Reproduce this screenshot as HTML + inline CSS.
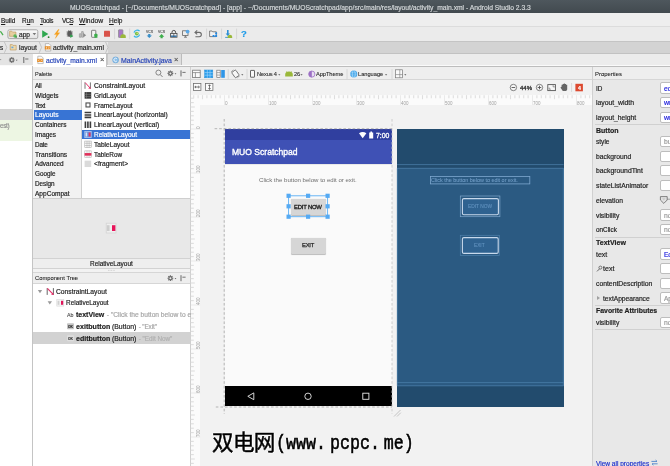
<!DOCTYPE html>
<html><head><meta charset="utf-8">
<style>
*{margin:0;padding:0;box-sizing:border-box}
html,body{width:670px;height:466px;overflow:hidden;background:#f2f2f2}
body{font-family:"Liberation Sans",sans-serif;font-size:6.7px;color:#1e1e1e;position:relative;line-height:1}
.a{position:absolute}
.t{position:absolute;white-space:pre;line-height:12px;height:12px;will-change:transform;-webkit-text-stroke:0.18px currentColor}
svg{position:absolute;overflow:visible}
</style></head><body>
<div class="a" style="left:0px;top:0px;width:670px;height:13px;background:linear-gradient(#4e575d,#424a4f);"></div>
<div class="a" style="left:0px;top:13px;width:670px;height:13.2px;background:#eeeeee;"></div>
<div class="a" style="left:0px;top:26.2px;width:670px;height:15px;background:#ebebeb;border-top:1px solid #dcdcdc;"></div>
<div class="a" style="left:0px;top:41.2px;width:670px;height:12.2px;background:#d3d3d3;border-top:1px solid #c4c4c4;"></div>
<div class="a" style="left:0px;top:41.7px;width:108px;height:11.5px;background:#e6e6e6;"></div>
<div class="a" style="left:0px;top:53.4px;width:670px;height:12px;background:#ececec;border-top:1px solid #c2c2c2;"></div>
<div class="a" style="left:0px;top:65.4px;width:670px;height:1.3px;background:#fafafa;border-bottom:0.7px solid #bdbdbd;"></div>
<div class="a" style="left:0px;top:54px;width:32.5px;height:11px;background:#e4e4e4;"></div>
<div class="a" style="left:107.3px;top:54px;width:74.5px;height:11.4px;background:#dedede;border-right:1px solid #bcbcbc;border-left:1px solid #c8c8c8;"></div>
<div class="a" style="left:32.8px;top:53.6px;width:74.5px;height:13.2px;background:#ffffff;border-right:1px solid #c4c4c4"></div>
<div class="a" style="left:0px;top:65.6px;width:32.5px;height:401px;background:#ffffff;"></div>
<div class="a" style="left:0px;top:109px;width:32.5px;height:10.6px;background:#d4d4d4;"></div>
<div class="a" style="left:0px;top:119.6px;width:32.5px;height:21px;background:#edf6e3;"></div>
<div class="a" style="left:32.3px;top:66px;width:1px;height:400px;background:#c4c4c4;"></div>
<div class="a" style="left:33.3px;top:66.7px;width:156.5px;height:13.5px;background:#eeeeee;border-bottom:1px solid #d6d6d6;"></div>
<div class="a" style="left:33.3px;top:80.2px;width:48.5px;height:118px;background:#f2f2f2;border-right:1px solid #cfcfcf;"></div>
<div class="a" style="left:81.8px;top:80.2px;width:108px;height:118px;background:#ffffff;"></div>
<div class="a" style="left:34.4px;top:110px;width:47.3px;height:9.9px;background:#3874d4;"></div>
<div class="a" style="left:81.8px;top:129.6px;width:108px;height:9.8px;background:#3874d4;"></div>
<div class="a" style="left:33.3px;top:197.6px;width:156.5px;height:61px;background:#e8e8e8;border-top:1px solid #cfcfcf;"></div>
<div class="a" style="left:33.3px;top:258px;width:156.5px;height:11px;background:#eeeeee;border-top:1px solid #d2d2d2;border-bottom:1px solid #d2d2d2;"></div>
<div class="a" style="left:33.3px;top:269px;width:156.5px;height:3.2px;background:#f2f2f2;"></div>
<div class="a" style="left:33.3px;top:272px;width:156.5px;height:12.2px;background:#eeeeee;border-top:1px solid #d6d6d6;border-bottom:1px solid #d6d6d6;"></div>
<div class="a" style="left:33.3px;top:284.2px;width:156.5px;height:182px;background:#ffffff;"></div>
<div class="a" style="left:33.3px;top:332.2px;width:156.5px;height:11.9px;background:#d2d2d2;"></div>
<div class="a" style="left:189.7px;top:66.7px;width:0.9px;height:400px;background:#d0d0d0;"></div>
<div class="a" style="left:190.6px;top:66.7px;width:401.5px;height:13.6px;background:#eeeeee;border-bottom:1px solid #d6d6d6;"></div>
<div class="a" style="left:190.6px;top:80.3px;width:401.5px;height:14.7px;background:#f2f2f2;"></div>
<div class="a" style="left:190.6px;top:95px;width:401.2px;height:10px;background:#fbfbfb;"></div>
<div class="a" style="left:190.6px;top:95px;width:9.6px;height:371px;background:#fbfbfb;"></div>
<div class="a" style="left:200.2px;top:105px;width:391.6px;height:361px;background:#f2f2f2;"></div>
<div class="a" style="left:592.2px;top:66.7px;width:78px;height:400px;background:#e8e8e8;border-left:1px solid #d0d0d0;"></div>
<div class="a" style="left:593.2px;top:66.7px;width:77px;height:13.6px;background:#eeeeee;border-bottom:1px solid #d6d6d6;"></div>
<div class="a" style="left:595px;top:124.4px;width:75px;height:0.8px;background:#d0d0d0;"></div>
<div class="a" style="left:595px;top:236.5px;width:75px;height:0.8px;background:#d0d0d0;"></div>
<div class="a" style="left:595px;top:305px;width:75px;height:0.8px;background:#d0d0d0;"></div>
<div class="a" style="left:595px;top:329.4px;width:75px;height:0.8px;background:#d0d0d0;"></div>
<div class="a" style="left:660.3px;top:82.4px;width:14px;height:11.2px;background:#ffffff;border:1px solid #bdbdbd;border-radius:2px;"></div>
<div class="a" style="left:660.3px;top:96.9px;width:14px;height:11.2px;background:#ffffff;border:1px solid #bdbdbd;border-radius:2px;"></div>
<div class="a" style="left:660.3px;top:111.80000000000001px;width:14px;height:11.2px;background:#ffffff;border:1px solid #bdbdbd;border-radius:2px;"></div>
<div class="a" style="left:660.3px;top:135.9px;width:14px;height:11.2px;background:#ffffff;border:1px solid #bdbdbd;border-radius:2px;"></div>
<div class="a" style="left:660.3px;top:150.6px;width:14px;height:11.2px;background:#ffffff;border:1px solid #bdbdbd;border-radius:2px;"></div>
<div class="a" style="left:660.3px;top:165.3px;width:14px;height:11.2px;background:#ffffff;border:1px solid #bdbdbd;border-radius:2px;"></div>
<div class="a" style="left:660.3px;top:179.9px;width:14px;height:11.2px;background:#ffffff;border:1px solid #bdbdbd;border-radius:2px;"></div>
<div class="a" style="left:660.3px;top:209.4px;width:14px;height:11.2px;background:#ffffff;border:1px solid #bdbdbd;border-radius:2px;"></div>
<div class="a" style="left:660.3px;top:224.0px;width:14px;height:11.2px;background:#ffffff;border:1px solid #bdbdbd;border-radius:2px;"></div>
<div class="a" style="left:660.3px;top:248.4px;width:14px;height:11.2px;background:#ffffff;border:1px solid #bdbdbd;border-radius:2px;"></div>
<div class="a" style="left:660.3px;top:263.09999999999997px;width:14px;height:11.2px;background:#ffffff;border:1px solid #bdbdbd;border-radius:2px;"></div>
<div class="a" style="left:660.3px;top:277.79999999999995px;width:14px;height:11.2px;background:#ffffff;border:1px solid #bdbdbd;border-radius:2px;"></div>
<div class="a" style="left:660.3px;top:292.4px;width:14px;height:11.2px;background:#ffffff;border:1px solid #bdbdbd;border-radius:2px;"></div>
<div class="a" style="left:660.3px;top:316.79999999999995px;width:14px;height:11.2px;background:#ffffff;border:1px solid #bdbdbd;border-radius:2px;"></div>
<svg style="left:0px;top:0px" width="670" height="466" viewBox="0 0 670 466"><path d="M667 199.2h3" stroke="#9a9a9a" stroke-width="0.9"/><path d="M660.4 196.6h6.8v3.4l-3.4 3.4l-3.4-3.4z" fill="#e2e2e2" stroke="#666" stroke-width="0.8"/><path d="M662 198.2h3.6l-1.8 2.4z" fill="#c8c8c8"/></svg>
<div class="a" style="left:224.5px;top:128.9px;width:167.2px;height:277.6px;background:#fafafa;"></div>
<div class="a" style="left:224.5px;top:128.9px;width:167.2px;height:11px;background:#303f9f;"></div>
<div class="a" style="left:224.5px;top:139.9px;width:167.2px;height:24px;background:#3f51b5;"></div>
<div class="a" style="left:224.5px;top:163.9px;width:167.2px;height:1.6px;background:linear-gradient(#d8d8d8,#fafafa);"></div>
<div class="a" style="left:224.5px;top:385.8px;width:167.2px;height:20.6px;background:#000000;"></div>
<div class="a" style="left:290.5px;top:198.7px;width:35.6px;height:16px;background:#d6d6d6;border-radius:1.2px;box-shadow:0 0.5px 0.8px rgba(0,0,0,0.25);"></div>
<div class="a" style="left:290.5px;top:237.9px;width:35.6px;height:15.8px;background:#d6d6d6;border-radius:1.2px;box-shadow:0 0.5px 0.8px rgba(0,0,0,0.25);"></div>
<svg style="left:0px;top:0px" width="670" height="466" viewBox="0 0 670 466"><rect x="288.6" y="195.8" width="39" height="20.9" fill="none" stroke="#5aaef5" stroke-width="0.9"/><rect x="286.5" y="193.70000000000002" width="4.2" height="4.2" fill="#55aaf3"/><rect x="306.0" y="193.70000000000002" width="4.2" height="4.2" fill="#55aaf3"/><rect x="325.5" y="193.70000000000002" width="4.2" height="4.2" fill="#55aaf3"/><rect x="286.5" y="204.20000000000002" width="4.2" height="4.2" fill="#55aaf3"/><rect x="325.5" y="204.20000000000002" width="4.2" height="4.2" fill="#55aaf3"/><rect x="286.5" y="214.6" width="4.2" height="4.2" fill="#55aaf3"/><rect x="306.0" y="214.6" width="4.2" height="4.2" fill="#55aaf3"/><rect x="325.5" y="214.6" width="4.2" height="4.2" fill="#55aaf3"/></svg>
<svg style="left:0px;top:0px" width="670" height="466" viewBox="0 0 670 466"><path d="M359 133.2 Q362.7 130.6 366.4 133.2 L362.7 138.2z" fill="#fff"/><path d="M369.2 132.4h1.2v-0.9h1.6v0.9h1.2v6.1h-4z" fill="#fff"/><path d="M253.8 392.9v6.8l-6-3.4z" fill="none" stroke="#e8e8e8" stroke-width="0.9"/><circle cx="308" cy="396.3" r="3.2" fill="none" stroke="#e8e8e8" stroke-width="0.9"/><rect x="362.8" y="393.2" width="6.1" height="6.1" fill="none" stroke="#e8e8e8" stroke-width="0.9"/></svg>
<svg style="left:0px;top:0px" width="670" height="466" viewBox="0 0 670 466"><g stroke="#a4a4a4" stroke-width="0.8" stroke-dasharray="2.6 2" fill="none"><path d="M224.2 119V414"/><path d="M392 119V414" stroke="#c4c4c4"/><path d="M214.6 128.7H392"/><path d="M215.8 407H392"/></g><g stroke="#b0b0b0" stroke-width="0.7"><path d="M394 416.5l6.5-6.5M397 416.5l3.8-3.8"/></g></svg>
<div class="a" style="left:397px;top:129px;width:166.6px;height:277.6px;background:#2b5a82;"></div>
<div class="a" style="left:397px;top:129px;width:166.6px;height:39.2px;background:#224b6d;"></div>
<div class="a" style="left:397px;top:386.2px;width:166.6px;height:20.4px;background:#224b6d;"></div>
<svg style="left:0px;top:0px" width="670" height="466" viewBox="0 0 670 466"><g fill="none" stroke="#4f82ad" stroke-width="0.7"><path d="M397 164.6H563.6M397 168.3H563.6M397 382.6H563.6M397 385.8H563.6"/><path d="M397.3 168.3V385.8M563.3 168.3V385.8"/><rect x="430.4" y="176.4" width="99.4" height="7.5" stroke="#7da7cf" stroke-width="0.8"/><rect x="460.3" y="196" width="39.6" height="20.7" stroke="#7fa6cc"/><rect x="462.4" y="198.6" width="36" height="16.2" rx="1.5" fill="#2f6290" stroke="#c8d9ec" stroke-width="1.1"/><rect x="460.3" y="235.3" width="39" height="20.2" stroke="#4f80ab"/><rect x="462.4" y="237.6" width="35.8" height="15.8" rx="1.5" fill="#2f6290" stroke="#c8d9ec" stroke-width="1.1"/></g></svg>
<svg style="left:0px;top:0px" width="670" height="466" viewBox="0 0 670 466"><g stroke="#dedede" stroke-width="1.1"><path d="M193.70 95.2v3"/><path d="M198.10 95.2v3"/><path d="M202.50 95.2v4"/><path d="M206.90 95.2v3"/><path d="M211.30 95.2v3"/><path d="M215.70 95.2v3"/><path d="M220.10 95.2v3"/><path d="M224.50 95.2v9.8" stroke="#e6e6e6" stroke-width="0.8"/><path d="M228.90 95.2v3"/><path d="M233.30 95.2v3"/><path d="M237.70 95.2v3"/><path d="M242.10 95.2v3"/><path d="M246.50 95.2v4"/><path d="M250.90 95.2v3"/><path d="M255.30 95.2v3"/><path d="M259.70 95.2v3"/><path d="M264.10 95.2v3"/><path d="M268.50 95.2v9.8" stroke="#e6e6e6" stroke-width="0.8"/><path d="M272.90 95.2v3"/><path d="M277.30 95.2v3"/><path d="M281.70 95.2v3"/><path d="M286.10 95.2v3"/><path d="M290.50 95.2v4"/><path d="M294.90 95.2v3"/><path d="M299.30 95.2v3"/><path d="M303.70 95.2v3"/><path d="M308.10 95.2v3"/><path d="M312.50 95.2v9.8" stroke="#e6e6e6" stroke-width="0.8"/><path d="M316.90 95.2v3"/><path d="M321.30 95.2v3"/><path d="M325.70 95.2v3"/><path d="M330.10 95.2v3"/><path d="M334.50 95.2v4"/><path d="M338.90 95.2v3"/><path d="M343.30 95.2v3"/><path d="M347.70 95.2v3"/><path d="M352.10 95.2v3"/><path d="M356.50 95.2v9.8" stroke="#e6e6e6" stroke-width="0.8"/><path d="M360.90 95.2v3"/><path d="M365.30 95.2v3"/><path d="M369.70 95.2v3"/><path d="M374.10 95.2v3"/><path d="M378.50 95.2v4"/><path d="M382.90 95.2v3"/><path d="M387.30 95.2v3"/><path d="M391.70 95.2v3"/><path d="M396.10 95.2v3"/><path d="M400.50 95.2v9.8" stroke="#e6e6e6" stroke-width="0.8"/><path d="M404.90 95.2v3"/><path d="M409.30 95.2v3"/><path d="M413.70 95.2v3"/><path d="M418.10 95.2v3"/><path d="M422.50 95.2v4"/><path d="M426.90 95.2v3"/><path d="M431.30 95.2v3"/><path d="M435.70 95.2v3"/><path d="M440.10 95.2v3"/><path d="M444.50 95.2v9.8" stroke="#e6e6e6" stroke-width="0.8"/><path d="M448.90 95.2v3"/><path d="M453.30 95.2v3"/><path d="M457.70 95.2v3"/><path d="M462.10 95.2v3"/><path d="M466.50 95.2v4"/><path d="M470.90 95.2v3"/><path d="M475.30 95.2v3"/><path d="M479.70 95.2v3"/><path d="M484.10 95.2v3"/><path d="M488.50 95.2v9.8" stroke="#e6e6e6" stroke-width="0.8"/><path d="M492.90 95.2v3"/><path d="M497.30 95.2v3"/><path d="M501.70 95.2v3"/><path d="M506.10 95.2v3"/><path d="M510.50 95.2v4"/><path d="M514.90 95.2v3"/><path d="M519.30 95.2v3"/><path d="M523.70 95.2v3"/><path d="M528.10 95.2v3"/><path d="M532.50 95.2v9.8" stroke="#e6e6e6" stroke-width="0.8"/><path d="M536.90 95.2v3"/><path d="M541.30 95.2v3"/><path d="M545.70 95.2v3"/><path d="M550.10 95.2v3"/><path d="M554.50 95.2v4"/><path d="M558.90 95.2v3"/><path d="M563.30 95.2v3"/><path d="M567.70 95.2v3"/><path d="M572.10 95.2v3"/><path d="M576.50 95.2v9.8" stroke="#e6e6e6" stroke-width="0.8"/><path d="M580.90 95.2v3"/><path d="M585.30 95.2v3"/><path d="M589.70 95.2v3"/><path d="M190.8 98.20h3"/><path d="M190.8 102.60h3"/><path d="M190.8 107.00h4"/><path d="M190.8 111.40h3"/><path d="M190.8 115.80h3"/><path d="M190.8 120.20h3"/><path d="M190.8 124.60h3"/><path d="M190.8 129.00h9.4" stroke="#e6e6e6" stroke-width="0.8"/><path d="M190.8 133.40h3"/><path d="M190.8 137.80h3"/><path d="M190.8 142.20h3"/><path d="M190.8 146.60h3"/><path d="M190.8 151.00h4"/><path d="M190.8 155.40h3"/><path d="M190.8 159.80h3"/><path d="M190.8 164.20h3"/><path d="M190.8 168.60h3"/><path d="M190.8 173.00h9.4" stroke="#e6e6e6" stroke-width="0.8"/><path d="M190.8 177.40h3"/><path d="M190.8 181.80h3"/><path d="M190.8 186.20h3"/><path d="M190.8 190.60h3"/><path d="M190.8 195.00h4"/><path d="M190.8 199.40h3"/><path d="M190.8 203.80h3"/><path d="M190.8 208.20h3"/><path d="M190.8 212.60h3"/><path d="M190.8 217.00h9.4" stroke="#e6e6e6" stroke-width="0.8"/><path d="M190.8 221.40h3"/><path d="M190.8 225.80h3"/><path d="M190.8 230.20h3"/><path d="M190.8 234.60h3"/><path d="M190.8 239.00h4"/><path d="M190.8 243.40h3"/><path d="M190.8 247.80h3"/><path d="M190.8 252.20h3"/><path d="M190.8 256.60h3"/><path d="M190.8 261.00h9.4" stroke="#e6e6e6" stroke-width="0.8"/><path d="M190.8 265.40h3"/><path d="M190.8 269.80h3"/><path d="M190.8 274.20h3"/><path d="M190.8 278.60h3"/><path d="M190.8 283.00h4"/><path d="M190.8 287.40h3"/><path d="M190.8 291.80h3"/><path d="M190.8 296.20h3"/><path d="M190.8 300.60h3"/><path d="M190.8 305.00h9.4" stroke="#e6e6e6" stroke-width="0.8"/><path d="M190.8 309.40h3"/><path d="M190.8 313.80h3"/><path d="M190.8 318.20h3"/><path d="M190.8 322.60h3"/><path d="M190.8 327.00h4"/><path d="M190.8 331.40h3"/><path d="M190.8 335.80h3"/><path d="M190.8 340.20h3"/><path d="M190.8 344.60h3"/><path d="M190.8 349.00h9.4" stroke="#e6e6e6" stroke-width="0.8"/><path d="M190.8 353.40h3"/><path d="M190.8 357.80h3"/><path d="M190.8 362.20h3"/><path d="M190.8 366.60h3"/><path d="M190.8 371.00h4"/><path d="M190.8 375.40h3"/><path d="M190.8 379.80h3"/><path d="M190.8 384.20h3"/><path d="M190.8 388.60h3"/><path d="M190.8 393.00h9.4" stroke="#e6e6e6" stroke-width="0.8"/><path d="M190.8 397.40h3"/><path d="M190.8 401.80h3"/><path d="M190.8 406.20h3"/><path d="M190.8 410.60h3"/><path d="M190.8 415.00h4"/><path d="M190.8 419.40h3"/><path d="M190.8 423.80h3"/><path d="M190.8 428.20h3"/><path d="M190.8 432.60h3"/><path d="M190.8 437.00h9.4" stroke="#e6e6e6" stroke-width="0.8"/><path d="M190.8 441.40h3"/><path d="M190.8 445.80h3"/><path d="M190.8 450.20h3"/><path d="M190.8 454.60h3"/><path d="M190.8 459.00h4"/><path d="M190.8 463.40h3"/></g></svg><svg style="left:0;top:0" width="670" height="466" viewBox="0 0 670 466"><path d="M-1 31.2 L1 32 L3 35.2" fill="none" stroke="#4caf50" stroke-width="1.3"/>
<defs><linearGradient id="cg" x1="0" y1="0" x2="0" y2="1"><stop offset="0" stop-color="#fbfbfb"/><stop offset="1" stop-color="#e2e2e2"/></linearGradient></defs><rect x="7.9" y="29.8" width="29.9" height="8.8" rx="1.6" fill="url(#cg)" stroke="#a2a2a2" stroke-width="0.9"/>
<path d="M9.6 31.2h2.2l0.7 0.8h3.4v4.3h-6.3z" fill="#e6cfa0" stroke="#b89255" stroke-width="0.6"/>
<circle cx="15" cy="36" r="1.7" fill="#5cb85c"/><circle cx="16.2" cy="37" r="0.8" fill="#2e7d32"/>
<path d="M32.6 33h3.6l-1.8 2.3z" fill="#777"/>
<path d="M42.2 30.2v7.6l6.2-3.8z" fill="#2fa84f"/><circle cx="48.6" cy="37.2" r="0.9" fill="#2e7d32"/>
<path d="M58.2 29.6l-3.8 5h2.3l-1.4 3.8 4.4-5.6h-2.4l1.9-3.2z" fill="#f5a01e" stroke="#f5a01e" stroke-width="0.3"/>
<ellipse cx="69.6" cy="33.8" rx="2.3" ry="3" fill="#5a5a5a"/><path d="M66.5 32h6.4M66.5 34h6.4M66.8 36h6M68.3 30.2l1 1M71 30.2l-1 1" stroke="#5a5a5a" stroke-width="0.7"/><path d="M70.3 34.3v3.6l3-1.8z" fill="#2fa84f"/>
<path d="M79.4 37.2v-3.4h1.6v3.4zM81.6 37.2v-5.6h1.6v5.6zM83.6 37.2v-4.4" stroke="#9a9a9a" stroke-width="0.7" fill="#c8c8c8"/><path d="M83.4 33.3v4l2.8-2z" fill="#8a8a8a"/>
<rect x="91.6" y="30.3" width="4.2" height="7" rx="0.5" fill="#f4f4f4" stroke="#666" stroke-width="0.8"/><path d="M94.4 34.2h3v3.6h-3z" fill="#3cae4a"/><circle cx="95.9" cy="35" r="1.5" fill="#3cae4a"/>
<rect x="104" y="30.8" width="6" height="6" rx="0.4" fill="#d9534a"/>
<path d="M114.6 28.6v10.6" stroke="#cfcfcf" stroke-width="0.8"/>
<path d="M129.7 28.6v10.6" stroke="#cfcfcf" stroke-width="0.8"/>
<path d="M206.6 28.6v10.6" stroke="#cfcfcf" stroke-width="0.8"/>
<path d="M221.6 28.6v10.6" stroke="#cfcfcf" stroke-width="0.8"/>
<path d="M236.6 28.6v10.6" stroke="#cfcfcf" stroke-width="0.8"/>
<rect x="118.5" y="29.8" width="4.4" height="7.6" rx="0.5" fill="#a878c8" stroke="#888" stroke-width="0.7"/><path d="M120.4 38v-1.4a2.6 2.2 0 0 1 5.4 0v1.4z" fill="#9ab83a"/>
<path d="M134 32.6a3.3 3.3 0 0 1 5.6-1.4" fill="none" stroke="#35b5e5" stroke-width="1.2"/><path d="M139.6 34.6a3.3 3.3 0 0 1 -5.6 1.4" fill="none" stroke="#35b5e5" stroke-width="1.2"/><circle cx="136.8" cy="33.6" r="1.9" fill="#6fbf4a"/><circle cx="137.2" cy="33.2" r="0.8" fill="#e8e070"/>
<path d="M148.2 34v1.4h-1.6l2.7 2.7 2.7-2.7h-1.6v-1.4z" fill="#3a8fc8"/>
<path d="M160.5 38.2v-1.4h-1.6l2.7-2.8 2.7 2.8h-1.6v1.4z" fill="#3cae4a"/>
<path d="M172 33.6v-1.4a1.8 1.8 0 0 1 3.6 0v1.4" fill="none" stroke="#444" stroke-width="0.9"/><rect x="170.6" y="33.4" width="6.4" height="3.8" fill="#f0f0f0" stroke="#444" stroke-width="0.8"/><path d="M171 36.2h5.6" stroke="#2a6fa8" stroke-width="1.4"/><path d="M173.8 33.6v3" stroke="#444" stroke-width="0.7"/>
<rect x="182.6" y="30.8" width="5.4" height="4.6" fill="#eee" stroke="#666" stroke-width="0.8"/><path d="M184 37.2h3M185.4 35.4v1.8" stroke="#666" stroke-width="0.8"/><circle cx="187.6" cy="31.6" r="1.9" fill="#58a8e8"/>
<path d="M195.6 32.4h3.6a2.1 2.1 0 0 1 0 4.3h-3.8" fill="none" stroke="#6a6a6a" stroke-width="1.1"/><path d="M197.2 30.4l-2.2 2 2.2 2" fill="none" stroke="#6a6a6a" stroke-width="1.1"/>
<path d="M209.6 31h2.4l0.7 0.8h3.6v4.8h-6.7z" fill="#f2f2f2" stroke="#666" stroke-width="0.8"/><rect x="212.6" y="35" width="1.9" height="1.9" fill="#1e88e5"/><rect x="215.2" y="35" width="1.9" height="1.9" fill="#1e88e5"/><rect x="215.2" y="32.4" width="1.9" height="1.9" fill="#1e88e5"/>
<path d="M227 30v3.6h-1.4l2.2 2.4 2.2-2.4h-1.4v-3.6z" fill="#2d8fd6"/><path d="M225.2 37.4h3" stroke="#2d8fd6" stroke-width="0.9"/><path d="M227.6 38v-1.2a2.3 2 0 0 1 4.6 0v1.2z" fill="#9ab83a"/>
<g fill="none" stroke="#b4b4b4" stroke-width="0.7"><path d="M4.4 42l2.4 5.4-2.4 5.4M39.2 42l2.4 5.4-2.4 5.4M105.6 42l2.4 5.4-2.4 5.4"/></g>
<path d="M10.2 44.6h2.2l0.6 0.8h3.2v4.6h-6z" fill="#ecd9ad" stroke="#b89255" stroke-width="0.6"/><rect x="11.4" y="46.6" width="2" height="1.6" fill="#6aa8dc"/>
<path d="M45.4 43.6h3.6l1.8 1.8v5.6h-5.4z" fill="#fafafa" stroke="#999" stroke-width="0.6"/><rect x="44.8" y="46.2" width="5.6" height="3.2" fill="#e8902a"/><path d="M46.0 47.800000000000004l1-0.8M46.0 47.800000000000004l1 0.8M49.3 47.800000000000004l-1-0.8M49.3 47.800000000000004l-1 0.8" stroke="#fff" stroke-width="0.5"/>
<path d="M37.8 56.2h3.6l1.8 1.8v5.6h-5.4z" fill="#fafafa" stroke="#999" stroke-width="0.6"/><rect x="37.199999999999996" y="58.800000000000004" width="5.6" height="3.2" fill="#e8902a"/><path d="M38.4 60.400000000000006l1-0.8M38.4 60.400000000000006l1 0.8M41.699999999999996 60.400000000000006l-1-0.8M41.699999999999996 60.400000000000006l-1 0.8" stroke="#fff" stroke-width="0.5"/>
<circle cx="115.6" cy="59.9" r="3" fill="#8cc0ea" stroke="#5a9ad0" stroke-width="0.5"/><path d="M116.9 58.8a1.7 1.7 0 1 0 0 2.2" fill="none" stroke="#fff" stroke-width="0.8"/>
<circle cx="11.8" cy="60" r="1.55" fill="none" stroke="#6a6a6a" stroke-width="1.1"/><g stroke="#6a6a6a" stroke-width="1.15"><path d="M13.40 60.00L14.70 60.00"/><path d="M12.93 61.13L13.85 62.05"/><path d="M11.80 61.60L11.80 62.90"/><path d="M10.67 61.13L9.75 62.05"/><path d="M10.20 60.00L8.90 60.00"/><path d="M10.67 58.87L9.75 57.95"/><path d="M11.80 58.40L11.80 57.10"/><path d="M12.93 58.87L13.85 57.95"/></g>
<path d="M15.8 59.8h1.8l-0.9 1.2z" fill="#666"/>
<path d="M23.8 57v6" stroke="#666" stroke-width="1"/><path d="M25.2 59h3.2" stroke="#666" stroke-width="0.9"/>
<path d="M0 59.6h1.2" stroke="#888" stroke-width="0.8"/>
<circle cx="158.4" cy="72.6" r="2.5" fill="none" stroke="#7a7a7a" stroke-width="0.9"/><path d="M160.3 74.6l2.2 2.3" stroke="#7a7a7a" stroke-width="1"/>
<circle cx="170.4" cy="73.4" r="1.55" fill="none" stroke="#6a6a6a" stroke-width="1.1"/><g stroke="#6a6a6a" stroke-width="1.15"><path d="M172.00 73.40L173.30 73.40"/><path d="M171.53 74.53L172.45 75.45"/><path d="M170.40 75.00L170.40 76.30"/><path d="M169.27 74.53L168.35 75.45"/><path d="M168.80 73.40L167.50 73.40"/><path d="M169.27 72.27L168.35 71.35"/><path d="M170.40 71.80L170.40 70.50"/><path d="M171.53 72.27L172.45 71.35"/></g>
<path d="M174.6 73.2h1.8l-0.9 1.2z" fill="#666"/>
<path d="M181 70.4v6" stroke="#666" stroke-width="1"/><path d="M182.4 72.4h3.2" stroke="#666" stroke-width="0.9"/>
<circle cx="170.4" cy="278.2" r="1.55" fill="none" stroke="#6a6a6a" stroke-width="1.1"/><g stroke="#6a6a6a" stroke-width="1.15"><path d="M172.00 278.20L173.30 278.20"/><path d="M171.53 279.33L172.45 280.25"/><path d="M170.40 279.80L170.40 281.10"/><path d="M169.27 279.33L168.35 280.25"/><path d="M168.80 278.20L167.50 278.20"/><path d="M169.27 277.07L168.35 276.15"/><path d="M170.40 276.60L170.40 275.30"/><path d="M171.53 277.07L172.45 276.15"/></g>
<path d="M174.6 278h1.8l-0.9 1.2z" fill="#666"/>
<path d="M181 275.2v6" stroke="#666" stroke-width="1"/><path d="M182.4 277.2h3.2" stroke="#666" stroke-width="0.9"/>
<path d="M108 270.4h7" stroke="#c4c4c4" stroke-width="0.8" stroke-dasharray="0.8 0.8"/>
<g transform="translate(0 0.6)">
<rect x="192.6" y="69.6" width="7.6" height="7.4" fill="#fafafa" stroke="#777" stroke-width="0.8"/><path d="M192.6 72h7.6M195.4 72v5" stroke="#777" stroke-width="0.7"/>
<rect x="204.6" y="69.4" width="8.2" height="7.8" fill="#279cec" stroke="#2b8fd8" stroke-width="0.5"/><path d="M204.6 72h8.2M204.6 74.6h8.2M207.3 69.4v7.8M210 69.4v7.8" stroke="#a8d8fa" stroke-width="0.6"/>
<rect x="216.8" y="69.6" width="3.4" height="7.4" fill="#fafafa" stroke="#777" stroke-width="0.7"/><path d="M216.8 72h3.4M216.8 74.5h3.4" stroke="#777" stroke-width="0.6"/><rect x="221.2" y="69.4" width="3.6" height="7.8" fill="#2f96e8"/>
<path d="M228.2 68.6v10" stroke="#d0d0d0" stroke-width="0.8"/>
<path d="M247 68.6v10" stroke="#d0d0d0" stroke-width="0.8"/>
<path d="M347 68.6v10" stroke="#d0d0d0" stroke-width="0.8"/>
<path d="M392 68.6v10" stroke="#d0d0d0" stroke-width="0.8"/>
<g transform="rotate(-35 235.4 73.2)"><rect x="233" y="70" width="4.8" height="6.6" rx="0.8" fill="#f6f6f6" stroke="#666" stroke-width="0.8"/></g><path d="M231.4 71.4a4.6 4.6 0 0 1 2-2M239.4 75.2a4.6 4.6 0 0 1 -2 2" fill="none" stroke="#666" stroke-width="0.6"/>
<path d="M241.2 73.6h2.2l-1.1 1.3z" fill="#555"/>
<path d="M278.2 73.6h2.2l-1.1 1.3z" fill="#555"/>
<path d="M300.4 73.6h2.2l-1.1 1.3z" fill="#555"/>
<path d="M385 73.6h2.2l-1.1 1.3z" fill="#555"/>
<path d="M404.2 73.6h2.2l-1.1 1.3z" fill="#555"/>
<rect x="250.5" y="69.8" width="4" height="6.8" rx="0.3" fill="#fafafa" stroke="#555" stroke-width="0.9"/>
<path d="M285.2 76v-2.2a3.8 3 0 0 1 7.6 0v2.2z" fill="#9ab83a"/><path d="M286.4 70.6l0.8 1.2M291.6 70.6l-0.8 1.2" stroke="#9ab83a" stroke-width="0.6"/>
<circle cx="311.8" cy="73.5" r="3.1" fill="#e8ddf2" stroke="#9b6fc4" stroke-width="0.8"/><path d="M311.8 70.4a3.1 3.1 0 0 0 0 6.2z" fill="#9b6fc4"/>
<circle cx="353.8" cy="73.5" r="3.5" fill="#2b9be8"/><g fill="none" stroke="#d4ecfb" stroke-width="0.5"><ellipse cx="353.8" cy="73.5" rx="1.5" ry="3.5"/><path d="M350.3 73.5h7M351 71.6h5.6M351 75.4h5.6"/></g>
<rect x="395.6" y="69.2" width="7" height="8" fill="#fafafa" stroke="#777" stroke-width="0.7"/><path d="M395.6 74h7M399.8 69.2v8" stroke="#777" stroke-width="0.6"/>
</g>
<rect x="193.4" y="83.5" width="7.5" height="7" fill="#fcfcfc" stroke="#707070" stroke-width="0.8"/><path d="M194.8 87h4.6M194.8 87l1.2-1.1M194.8 87l1.2 1.1M199.4 87l-1.2-1.1M199.4 87l-1.2 1.1" stroke="#444" stroke-width="0.7" fill="none"/>
<rect x="205.5" y="83.5" width="7.4" height="7" fill="#fcfcfc" stroke="#707070" stroke-width="0.8"/><path d="M209.5 84.8v4.6M209.5 84.8l-1.1 1.2M209.5 84.8l1.1 1.2M209.5 89.4l-1.1-1.2M209.5 89.4l1.1-1.2" stroke="#444" stroke-width="0.7" fill="none"/>
<circle cx="513.4" cy="87.5" r="3.2" fill="#f6f6f6" stroke="#666" stroke-width="0.8"/><path d="M511.6 87.5h3.6" stroke="#555" stroke-width="0.9"/>
<circle cx="539.5" cy="87.5" r="3.2" fill="#f6f6f6" stroke="#666" stroke-width="0.8"/><path d="M537.7 87.5h3.6M539.5 85.7v3.6" stroke="#555" stroke-width="0.9"/>
<rect x="547.8" y="84.6" width="7.6" height="6" fill="#f6f6f6" stroke="#555" stroke-width="0.9"/><path d="M549.2 89.2v-1.6M549.2 89.2h1.6M554 86v1.6M554 86h-1.6" stroke="#555" stroke-width="0.6"/>
<path d="M561.6 86.4v-1.6h1.1v-0.9h1.1v-0.3h1.1v0.4h1.1v0.8h1.2v4.6l-1 1.6h-3.4l-2.4-3.4 0.8-0.5z" fill="#666"/>
<path d="M571.6 83v9" stroke="#d0d0d0" stroke-width="0.8"/>
<rect x="575.4" y="83.8" width="7.5" height="7.5" fill="#dc4a30"/>
<path d="M85 82.39999999999999v6.4M90.4 82.39999999999999v6.4" stroke="#555" stroke-width="0.8"/><path d="M85.2 82.6l5 5.6" stroke="#e8306a" stroke-width="1"/><path d="M90.6 88.8l-2.4-0.4 2-1.8z" fill="#e8306a"/>
<rect x="84.6" y="92.08" width="6.6" height="6.6" fill="#3c3c3c"/><path d="M86.5 92.08v6.6M84.6 94.38h6.6M84.6 96.58h6.6" stroke="#8a8a8a" stroke-width="0.5"/>
<rect x="86" y="102.96" width="4" height="4" fill="#fff" stroke="#505050" stroke-width="1.1"/>
<path d="M84.6 112.53999999999999h6.6M84.6 114.94h6.6M84.6 117.34h6.6" stroke="#3c3c3c" stroke-width="1.6"/>
<path d="M85.4 121.42v6.6M87.9 121.42v6.6M90.4 121.42v6.6" stroke="#3c3c3c" stroke-width="1.6"/>
<rect x="84.8" y="131.3" width="6.4" height="6.4" fill="#6b97e0" stroke="#c8d8f4" stroke-width="0.6"/><rect x="85.6" y="132.5" width="1.6" height="4" fill="#d6e2f6"/><rect x="88.6" y="132.5" width="2" height="4" fill="#e0305a"/>
<g stroke="#a8a8a8" stroke-width="0.6" fill="none"><rect x="84.8" y="141.07999999999998" width="6.4" height="6.4"/><path d="M84.8 143.27999999999997h6.4M84.8 145.47999999999996h6.4M87 141.07999999999998v6.4M89.1 141.07999999999998v6.4"/></g>
<g stroke="#b0b0b0" stroke-width="0.6" fill="none"><rect x="84.8" y="150.86" width="6.4" height="6.4"/><path d="M87 150.86v6.4M89.1 150.86v6.4"/></g><rect x="84.6" y="153.06" width="6.8" height="2.6" fill="#e0305a"/>
<rect x="84.6" y="160.64" width="6.6" height="6.4" fill="#dadada"/>
<rect x="106.2" y="223.2" width="9.8" height="9.8" fill="#efefef" stroke="#d2d2d2" stroke-width="0.7"/><rect x="106.8" y="225.2" width="2.8" height="5.8" fill="#cdcdcd"/><rect x="112" y="225.2" width="3.4" height="5.8" fill="#e8145a"/>
<path d="M37.8 290h4.4l-2.2 3.2z" fill="#9a9a9a"/><path d="M47.6 301.3h4.4l-2.2 3.2z" fill="#9a9a9a"/>
<path d="M47.2 288.1v6.8M53.4 288.1v6.8" stroke="#555" stroke-width="0.9"/><path d="M47.4 288.3l5.8 6" stroke="#e8306a" stroke-width="1.1"/><path d="M53.6 294.9l-2.6-0.4 2.2-2z" fill="#e8306a"/>
<rect x="56.8" y="299.5" width="7" height="6.6" fill="#f4f4f4" stroke="#d8d8d8" stroke-width="0.6"/><rect x="57.6" y="300.8" width="1.8" height="4" fill="#d0d0d0"/><rect x="61" y="300.8" width="2.2" height="4" fill="#e0145a"/>
<rect x="67" y="323.3" width="7" height="6" rx="0.8" fill="#c4c4c4"/>
<rect x="67" y="335.2" width="7" height="6" rx="0.8" fill="#dedede"/>
<path d="M597 271.4l2.6-2.6" stroke="#666" stroke-width="1"/><circle cx="600.4" cy="267.6" r="1.5" fill="none" stroke="#666" stroke-width="0.9"/>
<path d="M597 296v4l3-2z" fill="#a0a0a0"/>
<path d="M651.4 461.4h5.6l-1.4-1.3M657.6 463.8h-5.6l1.4 1.3" fill="none" stroke="#3a78c8" stroke-width="0.8"/></svg>
<div class="a" id="wm" style="left:0;top:0;width:670px;height:466px;color:#000;text-shadow:1px 0 0.6px #fff,-1px 0 0.6px #fff,0 1px 0.6px #fff,0 -1px 0.6px #fff,0 0 2px #fff;">
<span class="a" style="left:211.7px;top:428.7px;-webkit-text-stroke:0.45px #000;font-family:'Noto Sans CJK SC','WenQuanYi Zen Hei',sans-serif;font-size:21.6px;line-height:24px;white-space:nowrap;letter-spacing:-0.7px;will-change:transform">双电网</span>
<span class="a" style="left:275.5px;top:432px;font-family:'Liberation Mono',monospace;font-size:20px;line-height:24px;white-space:pre;word-spacing:-7.3px;transform-origin:0 0;transform:scaleX(0.8333);-webkit-text-stroke:0.6px #000">(www. pcpc. me)</span>
</div>

<div class="t" style="left:70.40px;top:1.70px;font-size:6.74px;color:#d4d8da;">MUOScratchpad - [~/Documents/MUOScratchpad] - [app] - ~/Documents/MUOScratchpad/app/src/main/res/layout/activity_main.xml - Android Studio 2.3.3</div>
<div class="t" style="left:1.20px;top:14.50px;font-size:6.43px;color:#1e1e1e;"><u>B</u>uild</div>
<div class="t" style="left:22.00px;top:14.50px;font-size:6.43px;color:#1e1e1e;">R<u>u</u>n</div>
<div class="t" style="left:40.00px;top:14.50px;font-size:6.37px;color:#1e1e1e;letter-spacing:-0.374px;"><u>T</u>ools</div>
<div class="t" style="left:62.00px;top:14.50px;font-size:6.37px;color:#1e1e1e;letter-spacing:-0.696px;">VC<u>S</u></div>
<div class="t" style="left:79.00px;top:14.50px;font-size:6.75px;color:#1e1e1e;"><u>W</u>indow</div>
<div class="t" style="left:109.00px;top:14.50px;font-size:6.56px;color:#1e1e1e;"><u>H</u>elp</div>
<div class="t" style="left:19.00px;top:28.50px;font-size:6.59px;color:#1e1e1e;">app</div>
<div class="t" style="left:241.20px;top:28.10px;font-size:9.45px;color:#1e9be8;letter-spacing:-0.373px;font-weight:700;">?</div>
<div class="t" style="left:146.00px;top:26.10px;font-size:3.42px;color:#444;-webkit-text-stroke:0.08px currentColor;letter-spacing:-0.011px;">VCS</div>
<div class="t" style="left:158.00px;top:26.10px;font-size:3.50px;color:#444;-webkit-text-stroke:0.08px currentColor;">VCS</div>
<div class="t" style="left:0.00px;top:41.80px;font-size:6.37px;color:#1e1e1e;letter-spacing:-0.183px;">s</div>
<div class="t" style="left:19.00px;top:41.80px;font-size:6.74px;color:#1e1e1e;">layout</div>
<div class="t" style="left:53.00px;top:41.80px;font-size:6.70px;color:#1e1e1e;">activity_main.xml</div>
<div class="t" style="left:46.00px;top:54.50px;font-size:6.70px;color:#2744b8;">activity_main.xml</div>
<div class="t" style="left:121.00px;top:54.50px;font-size:6.92px;color:#2744b8;">MainActivity.java</div>
<div class="t" style="left:99.60px;top:54.30px;font-size:7.53px;color:#555;">×</div>
<div class="t" style="left:174.00px;top:54.30px;font-size:7.53px;color:#555;">×</div>
<div class="t" style="left:0.00px;top:120.10px;font-size:6.37px;color:#909090;letter-spacing:-0.353px;">est)</div>
<div class="t" style="left:35.40px;top:68.20px;font-size:5.56px;color:#1e1e1e;-webkit-text-stroke:0.08px currentColor;">Palette</div>
<div class="t" style="left:35.40px;top:80.10px;font-size:6.37px;color:#1c1c1c;letter-spacing:-0.227px;">All</div>
<div class="t" style="left:35.40px;top:89.88px;font-size:6.53px;color:#1c1c1c;">Widgets</div>
<div class="t" style="left:35.40px;top:99.66px;font-size:6.37px;color:#1c1c1c;letter-spacing:-0.444px;">Text</div>
<div class="t" style="left:35.40px;top:109.44px;font-size:6.74px;color:#ffffff;">Layouts</div>
<div class="t" style="left:35.40px;top:119.22px;font-size:6.53px;color:#1c1c1c;">Containers</div>
<div class="t" style="left:35.40px;top:129.00px;font-size:6.43px;color:#1c1c1c;">Images</div>
<div class="t" style="left:35.40px;top:138.78px;font-size:6.37px;color:#1c1c1c;letter-spacing:-0.212px;">Date</div>
<div class="t" style="left:35.40px;top:148.56px;font-size:6.63px;color:#1c1c1c;">Transitions</div>
<div class="t" style="left:35.40px;top:158.34px;font-size:6.43px;color:#1c1c1c;">Advanced</div>
<div class="t" style="left:35.40px;top:168.12px;font-size:6.37px;color:#1c1c1c;">Google</div>
<div class="t" style="left:35.40px;top:177.90px;font-size:6.37px;color:#1c1c1c;letter-spacing:-0.037px;">Design</div>
<div class="t" style="left:35.40px;top:187.68px;font-size:6.55px;color:#1c1c1c;">AppCompat</div>
<div class="t" style="left:93.50px;top:80.10px;font-size:6.75px;color:#1c1c1c;">ConstraintLayout</div>
<div class="t" style="left:93.50px;top:89.88px;font-size:6.56px;color:#1c1c1c;">GridLayout</div>
<div class="t" style="left:93.50px;top:99.66px;font-size:6.57px;color:#1c1c1c;">FrameLayout</div>
<div class="t" style="left:93.50px;top:109.44px;font-size:6.66px;color:#1c1c1c;">LinearLayout (horizontal)</div>
<div class="t" style="left:93.50px;top:119.22px;font-size:6.58px;color:#1c1c1c;">LinearLayout (vertical)</div>
<div class="t" style="left:93.50px;top:129.00px;font-size:6.51px;color:#ffffff;">RelativeLayout</div>
<div class="t" style="left:93.50px;top:138.78px;font-size:6.58px;color:#1c1c1c;">TableLayout</div>
<div class="t" style="left:93.50px;top:148.56px;font-size:6.40px;color:#1c1c1c;">TableRow</div>
<div class="t" style="left:93.50px;top:158.34px;font-size:6.67px;color:#1c1c1c;">&lt;fragment&gt;</div>
<div class="t" style="left:89.90px;top:258.30px;font-size:6.47px;color:#1e1e1e;">RelativeLayout</div>
<div class="t" style="left:35.40px;top:272.30px;font-size:5.79px;color:#1e1e1e;-webkit-text-stroke:0.08px currentColor;">Component Tree</div>
<div class="t" style="left:55.90px;top:286.00px;font-size:6.73px;color:#1e1e1e;">ConstraintLayout</div>
<div class="t" style="left:66.20px;top:297.30px;font-size:6.44px;color:#1e1e1e;">RelativeLayout</div>
<div class="t" style="left:67.00px;top:308.90px;font-size:5.31px;color:#444;-webkit-text-stroke:0.08px currentColor;">Ab</div>
<div class="t" style="left:75.60px;top:309.10px;font-size:7.01px;color:#1e1e1e;font-weight:700;">textView</div>
<div class="t" style="left:104.50px;top:309.10px;font-size:6.65px;color:#a6a6a6;width:85.50px;overflow:hidden;"> - "Click the button below to edit or exit."</div>
<div class="t" style="left:75.60px;top:320.90px;font-size:7.04px;color:#1e1e1e;letter-spacing:0.040px;font-weight:700;">exitbutton</div>
<div class="t" style="left:112.00px;top:320.90px;font-size:6.86px;color:#1e1e1e;">(Button)</div>
<div class="t" style="left:137.00px;top:320.90px;font-size:6.37px;color:#a6a6a6;letter-spacing:-0.110px;"> - "Exit"</div>
<div class="t" style="left:75.60px;top:332.80px;font-size:7.04px;color:#1e1e1e;font-weight:700;">editbutton</div>
<div class="t" style="left:112.00px;top:332.80px;font-size:6.86px;color:#1e1e1e;">(Button)</div>
<div class="t" style="left:137.00px;top:332.80px;font-size:6.37px;color:#b0b0b0;letter-spacing:-0.020px;"> - "Edit Now"</div>
<div class="t" style="left:68.00px;top:320.80px;font-size:3.33px;color:#333;font-weight:700;">OK</div>
<div class="t" style="left:68.00px;top:332.70px;font-size:3.33px;color:#444;font-weight:700;">OK</div>
<div class="t" style="left:257.20px;top:68.20px;font-size:5.70px;color:#1e1e1e;-webkit-text-stroke:0.08px currentColor;letter-spacing:-0.159px;">Nexus 4</div>
<div class="t" style="left:293.50px;top:68.20px;font-size:5.70px;color:#1e1e1e;-webkit-text-stroke:0.08px currentColor;letter-spacing:-0.171px;">26</div>
<div class="t" style="left:316.00px;top:68.20px;font-size:5.70px;color:#1e1e1e;-webkit-text-stroke:0.08px currentColor;letter-spacing:-0.061px;">AppTheme</div>
<div class="t" style="left:358.40px;top:68.20px;font-size:5.70px;color:#1e1e1e;-webkit-text-stroke:0.08px currentColor;letter-spacing:-0.008px;">Language</div>
<div class="t" style="left:519.90px;top:82.00px;font-size:6.00px;color:#333;-webkit-text-stroke:0.08px currentColor;-webkit-text-stroke:0.3px #333;">44%</div>
<div class="t" style="left:577.60px;top:82.00px;font-size:5.28px;color:#fff;letter-spacing:0.263px;font-weight:700;">4</div>
<div class="t" style="left:225.40px;top:97.80px;font-size:4.67px;color:#a0a0a0;-webkit-text-stroke:0.08px currentColor;-webkit-text-stroke:0;">0</div>
<div class="t" style="left:269.40px;top:97.80px;font-size:4.49px;color:#a0a0a0;-webkit-text-stroke:0.08px currentColor;-webkit-text-stroke:0;">100</div>
<div class="t" style="left:313.40px;top:97.80px;font-size:4.49px;color:#a0a0a0;-webkit-text-stroke:0.08px currentColor;-webkit-text-stroke:0;">200</div>
<div class="t" style="left:357.40px;top:97.80px;font-size:4.49px;color:#a0a0a0;-webkit-text-stroke:0.08px currentColor;-webkit-text-stroke:0;">300</div>
<div class="t" style="left:401.40px;top:97.80px;font-size:4.49px;color:#a0a0a0;-webkit-text-stroke:0.08px currentColor;-webkit-text-stroke:0;">400</div>
<div class="t" style="left:445.40px;top:97.80px;font-size:4.49px;color:#a0a0a0;-webkit-text-stroke:0.08px currentColor;-webkit-text-stroke:0;">500</div>
<div class="t" style="left:489.40px;top:97.80px;font-size:4.49px;color:#a0a0a0;-webkit-text-stroke:0.08px currentColor;-webkit-text-stroke:0;">600</div>
<div class="t" style="left:533.40px;top:97.80px;font-size:4.49px;color:#a0a0a0;-webkit-text-stroke:0.08px currentColor;-webkit-text-stroke:0;">700</div>
<div class="t" style="left:577.40px;top:97.80px;font-size:4.49px;color:#a0a0a0;-webkit-text-stroke:0.08px currentColor;-webkit-text-stroke:0;">800</div>
<div class="t" style="left:192.80px;top:128.60px;transform-origin:0 0;transform:rotate(-90deg);font-size:4.67px;color:#a0a0a0;-webkit-text-stroke:0.08px currentColor;-webkit-text-stroke:0;">0</div>
<div class="t" style="left:192.80px;top:172.60px;transform-origin:0 0;transform:rotate(-90deg);font-size:4.49px;color:#a0a0a0;-webkit-text-stroke:0.08px currentColor;-webkit-text-stroke:0;">100</div>
<div class="t" style="left:192.80px;top:216.60px;transform-origin:0 0;transform:rotate(-90deg);font-size:4.49px;color:#a0a0a0;-webkit-text-stroke:0.08px currentColor;-webkit-text-stroke:0;">200</div>
<div class="t" style="left:192.80px;top:260.60px;transform-origin:0 0;transform:rotate(-90deg);font-size:4.49px;color:#a0a0a0;-webkit-text-stroke:0.08px currentColor;-webkit-text-stroke:0;">300</div>
<div class="t" style="left:192.80px;top:304.60px;transform-origin:0 0;transform:rotate(-90deg);font-size:4.49px;color:#a0a0a0;-webkit-text-stroke:0.08px currentColor;-webkit-text-stroke:0;">400</div>
<div class="t" style="left:192.80px;top:348.60px;transform-origin:0 0;transform:rotate(-90deg);font-size:4.49px;color:#a0a0a0;-webkit-text-stroke:0.08px currentColor;-webkit-text-stroke:0;">500</div>
<div class="t" style="left:192.80px;top:392.60px;transform-origin:0 0;transform:rotate(-90deg);font-size:4.49px;color:#a0a0a0;-webkit-text-stroke:0.08px currentColor;-webkit-text-stroke:0;">600</div>
<div class="t" style="left:192.80px;top:436.60px;transform-origin:0 0;transform:rotate(-90deg);font-size:4.49px;color:#a0a0a0;-webkit-text-stroke:0.08px currentColor;-webkit-text-stroke:0;">700</div>
<div class="t" style="left:231.90px;top:146.30px;font-size:8.55px;color:#ffffff;-webkit-text-stroke:0.35px #fff;">MUO Scratchpad</div>
<div class="t" style="left:376.00px;top:129.90px;font-size:6.88px;color:#ffffff;-webkit-text-stroke:0.3px #fff;">7:00</div>
<div class="t" style="left:258.70px;top:173.70px;font-size:6.09px;color:#6e6e6e;-webkit-text-stroke:0.08px currentColor;-webkit-text-stroke:0;">Click the button below to edit or exit.</div>
<div class="t" style="left:294.40px;top:200.60px;font-size:5.92px;color:#222;-webkit-text-stroke:0.08px currentColor;letter-spacing:-0.214px;-webkit-text-stroke:0.32px #222;">EDIT NOW</div>
<div class="t" style="left:302.00px;top:239.40px;font-size:5.92px;color:#2a2a2a;-webkit-text-stroke:0.08px currentColor;letter-spacing:-0.292px;-webkit-text-stroke:0.25px #2a2a2a;">EXIT</div>
<div class="t" style="left:430.80px;top:173.80px;font-size:5.41px;color:#6f9bc4;-webkit-text-stroke:0.08px currentColor;">Click the button below to edit or exit.</div>
<div class="t" style="left:467.90px;top:200.60px;font-size:4.84px;color:#6494c0;-webkit-text-stroke:0.08px currentColor;">EDIT NOW</div>
<div class="t" style="left:474.20px;top:239.80px;font-size:4.78px;color:#6494c0;-webkit-text-stroke:0.08px currentColor;letter-spacing:-0.009px;">EXIT</div>
<div class="t" style="left:595.00px;top:67.50px;font-size:5.92px;color:#1e1e1e;-webkit-text-stroke:0.08px currentColor;">Properties</div>
<div class="t" style="left:595.70px;top:82.50px;font-size:6.37px;color:#1e1e1e;letter-spacing:-0.083px;">ID</div>
<div class="t" style="left:595.70px;top:97.00px;font-size:6.84px;color:#1e1e1e;">layout_width</div>
<div class="t" style="left:595.70px;top:111.90px;font-size:6.77px;color:#1e1e1e;">layout_height</div>
<div class="t" style="left:595.70px;top:136.00px;font-size:6.57px;color:#1e1e1e;">style</div>
<div class="t" style="left:595.70px;top:150.70px;font-size:6.75px;color:#1e1e1e;">background</div>
<div class="t" style="left:595.70px;top:165.40px;font-size:6.83px;color:#1e1e1e;">backgroundTint</div>
<div class="t" style="left:595.70px;top:180.00px;font-size:6.76px;color:#1e1e1e;">stateListAnimator</div>
<div class="t" style="left:595.70px;top:194.80px;font-size:6.72px;color:#1e1e1e;">elevation</div>
<div class="t" style="left:595.70px;top:209.50px;font-size:6.76px;color:#1e1e1e;">visibility</div>
<div class="t" style="left:595.70px;top:224.10px;font-size:6.37px;color:#1e1e1e;">onClick</div>
<div class="t" style="left:595.70px;top:248.50px;font-size:7.01px;color:#1e1e1e;">text</div>
<div class="t" style="left:595.70px;top:277.90px;font-size:6.80px;color:#1e1e1e;">contentDescription</div>
<div class="t" style="left:595.70px;top:316.90px;font-size:6.76px;color:#1e1e1e;">visibility</div>
<div class="t" style="left:595.70px;top:124.50px;font-size:7.01px;color:#1e1e1e;font-weight:700;">Button</div>
<div class="t" style="left:595.70px;top:237.00px;font-size:7.04px;color:#1e1e1e;letter-spacing:0.006px;font-weight:700;">TextView</div>
<div class="t" style="left:595.70px;top:305.20px;font-size:6.92px;color:#1e1e1e;font-weight:700;">Favorite Attributes</div>
<div class="t" style="left:603.40px;top:263.20px;font-size:7.04px;color:#1e1e1e;letter-spacing:0.064px;">text</div>
<div class="t" style="left:603.00px;top:292.50px;font-size:6.67px;color:#1e1e1e;">textAppearance</div>
<div class="t" style="left:596.30px;top:458.10px;font-size:6.54px;color:#2233cc;"><u>View all properties</u></div>
<div class="t" style="left:664.00px;top:82.50px;font-size:6.74px;color:#2222dd;">ed</div>
<div class="t" style="left:664.00px;top:97.00px;font-size:7.04px;color:#2222dd;letter-spacing:0.035px;">wr</div>
<div class="t" style="left:664.00px;top:111.90px;font-size:7.04px;color:#2222dd;letter-spacing:0.035px;">wr</div>
<div class="t" style="left:664.00px;top:136.00px;font-size:6.74px;color:#999;">bu</div>
<div class="t" style="left:664.00px;top:209.50px;font-size:6.74px;color:#999;">no</div>
<div class="t" style="left:664.00px;top:224.10px;font-size:6.74px;color:#999;">no</div>
<div class="t" style="left:664.00px;top:248.50px;font-size:6.54px;color:#2222dd;">Ed</div>
<div class="t" style="left:664.00px;top:292.50px;font-size:6.54px;color:#999;">Ap</div>
<div class="t" style="left:664.00px;top:316.90px;font-size:6.74px;color:#999;">no</div>
</body></html>
